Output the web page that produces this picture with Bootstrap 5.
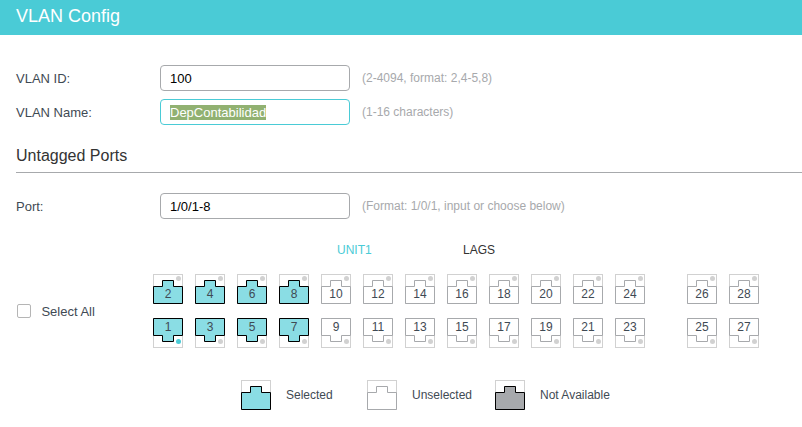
<!DOCTYPE html>
<html lang="en">
<head>
<meta charset="utf-8">
<meta name="viewport" content="width=device-width, initial-scale=1">
<title>VLAN Config</title>
<link href="https://cdn.jsdelivr.net/npm/bootstrap@5.3.0/dist/css/bootstrap.min.css" rel="stylesheet">
<style>
  body { font: 13px/16px "Liberation Sans", Arial, sans-serif; color: #3f4a54; height: 427px; overflow: hidden; }
  .page-head { height: 35px; padding: 0 16px 3px; background: #4acbd6; color: #fff; font-size: 18px; }
  .page-head h1 { font-size: 18px; line-height: 20px; font-weight: 400; }
  .config-form { padding-top: 30px; }
  .field-row { height: 26px; padding-left: 16px; }
  .field-row.port-field { margin-top: 20px; }
  .field-row label { width: 144px; padding-top: 2px; }
  .form-control.field { width: 190px; height: 26px; padding: 0 9px; border: 1px solid #a7a9ac; border-radius: 4px; font-size: 13px; line-height: 24px; color: #000; }
  .form-control.field.active-field { border-color: #4acbd6; }
  .picked { background: #91b171; color: #fff; line-height: 15px; height: 15px; margin-top: 5px; }
  .hint { margin-left: 12px; font-size: 12px; color: #a7a9ac; }
  .section-title { margin: 21px 0 0 16px; height: 27px; border-bottom: 1px solid #a7a9ac; font-size: 16px; line-height: 20px; font-weight: 400; color: #333; }
  .unit-tabs { margin-top: 23px; padding-left: 337px; font-size: 12px; height: 16px; }
  .unit-tabs a { width: 126px; color: #333; text-decoration: none; }
  .unit-tabs a.current { color: #4acbd6; }
  .port-panel { margin-top: 16px; }
  .all-check { width: 136px; margin-left: 17px; gap: 10.4px; }
  .all-check label { padding-top: 1px; }
  .form-check-input.box { width: 14px; height: 14px; margin: 1px 0 0; border: 1px solid #b5b5b5; border-radius: 2px; }
  .ports { gap: 14px; }
  .port-line { gap: 12px; }
  .port-gap { margin-left: 30px; }
  svg { display: block; flex: none; }
  svg text { font-size: 12px; text-anchor: middle; fill: #3f4a54; }
  .frame { fill: #fff; stroke: #d1d1d1; }
  .plug { fill: #fff; stroke: #a7a9ac; }
  .on .plug { fill: #8adde4; stroke: #000; }
  .off .plug { fill: #a7a9ac; stroke: #000; }
  .led { fill: #d1d1d1; }
  .led.live { fill: #4acbd6; }
  .legend { margin-top: 32px; padding-left: 241px; font-size: 12px; }
  .legend span { margin-left: 15px; }
  .legend-item { width: 126px; }
  .legend-item.wide { width: 128px; }
</style>
</head>
<body class="bg-white">
<header class="page-head d-flex align-items-center"><h1 class="m-0">VLAN Config</h1></header>
<main class="config-form">
  <div class="field-row d-flex align-items-center">
    <label for="vid">VLAN ID:</label>
    <input id="vid" class="form-control field" value="100">
    <span class="hint">(2-4094, format: 2,4-5,8)</span>
  </div>
  <div class="field-row d-flex align-items-center mt-2">
    <label>VLAN Name:</label>
    <div class="form-control field active-field d-flex align-items-start"><span class="picked">DepContabilidad</span></div>
    <span class="hint">(1-16 characters)</span>
  </div>
  <h2 class="section-title">Untagged Ports</h2>
  <div class="field-row port-field d-flex align-items-center">
    <label for="port">Port:</label>
    <input id="port" class="form-control field" value="1/0/1-8">
    <span class="hint">(Format: 1/0/1, input or choose below)</span>
  </div>
  <nav class="unit-tabs d-flex"><a class="current" href="#">UNIT1</a><a href="#">LAGS</a></nav>
  <div class="port-panel d-flex align-items-center">
    <div class="all-check d-flex align-items-start">
      <input class="form-check-input box" type="checkbox" id="all"><label for="all">Select All</label>
    </div>
    <div class="ports d-flex flex-column">
      <div class="port-line d-flex" id="even"></div>
      <div class="port-line d-flex" id="odd"></div>
    </div>
  </div>
  <div class="legend d-flex">
    <div class="legend-item d-flex align-items-center"><svg class="on" width="30" height="30"><rect class="frame" x=".5" y=".5" width="29" height="29"/><path class="plug" d="M.5 12.5H9.5V6.5H20.5V12.5H29.5V29.5H.5Z"/></svg><span>Selected</span></div>
    <div class="legend-item wide d-flex align-items-center"><svg width="30" height="30"><rect class="frame" x=".5" y=".5" width="29" height="29"/><path class="plug" d="M.5 12.5H9.5V6.5H20.5V12.5H29.5V29.5H.5Z"/></svg><span>Unselected</span></div>
    <div class="d-flex align-items-center"><svg class="off" width="30" height="30"><rect class="frame" x=".5" y=".5" width="29" height="29"/><path class="plug" d="M.5 12.5H9.5V6.5H20.5V12.5H29.5V29.5H.5Z"/></svg><span>Not Available</span></div>
  </div>
</main>
<script src="https://cdn.jsdelivr.net/npm/bootstrap@5.3.0/dist/js/bootstrap.bundle.min.js"></script>
<script>
  // Even ports sit on the upper line with the clip up, odd ports below with the clip down.
  for (let n = 1; n <= 28; n++) {
    const up = n % 2 === 0;
    const cls = (n <= 8 ? 'on ' : '') + (n === 25 || n === 26 ? 'port-gap' : '');
    const d = up ? 'M.5 12.5H9.5V6.5H20.5V12.5H29.5V29.5H.5Z' : 'M.5 .5H29.5V17.5H20.5V23.5H9.5V17.5H.5Z';
    document.getElementById(up ? 'even' : 'odd').insertAdjacentHTML('beforeend',
      `<svg class="${cls}" width="30" height="30"><rect class="frame" x=".5" y=".5" width="29" height="29"/>` +
      `<path class="plug" d="${d}"/><circle class="led${n === 1 ? ' live' : ''}" cx="25.5" cy="${up ? 4.5 : 23.5}" r="2.5"/>` +
      `<text x="15" y="${up ? 24 : 13}">${n}</text></svg>`);
  }
</script>
</body>
</html>
